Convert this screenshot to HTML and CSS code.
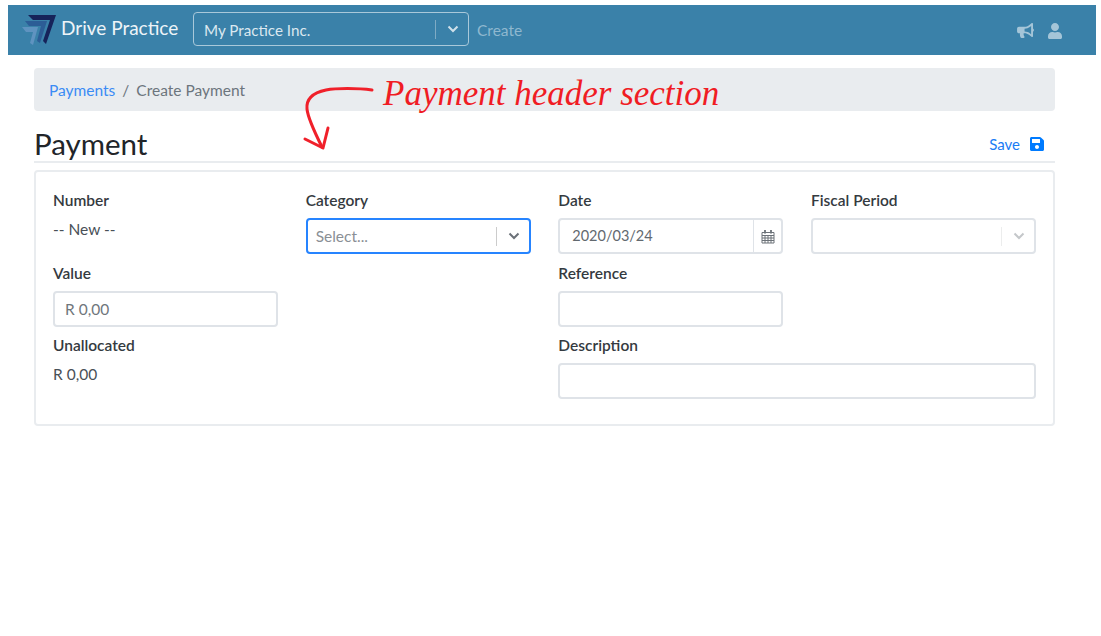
FILE: index.html
```html
<!DOCTYPE html>
<html lang="en">
<head>
<meta charset="utf-8">
<title>Create Payment</title>
<link rel="stylesheet" href="styles.css">
</head>
<body>
<div class="page">
  <nav class="navbar">
    <svg class="logo" viewBox="0 0 36 32" aria-hidden="true">
      <polygon class="logo-light" points="0,13 16,13 11,31 8,29 11,18 4,18"/>
      <polygon class="logo-mid" points="3,7 25,7 18,29 15,27 19,12 7,12"/>
      <polygon class="logo-dark" points="6,1 34,1 24,30 21,27 28,6 11,6"/>
    </svg>
    <span class="brand">Drive Practice</span>
    <div class="nav-select">
      <span class="nav-select-value">My Practice Inc.</span>
      <span class="sep sep-nav"></span>
      <svg class="chev chev-nav" viewBox="0 0 12 8"><path d="M1.500 1.500 6 6l4.500-4.500"/></svg>
    </div>
    <span class="nav-link">Create</span>
    <div class="nav-icons">
      <svg class="icon-horn" viewBox="0 0 576 512"><path d="M576 240c0-23.630-12.950-44.040-32-55.120V32.010C544 23.260 537.020 0 512 0c-7.120 0-14.190 2.380-19.980 7.020l-85.030 68.030C364.280 109.190 310.660 128 256 128H64c-35.350 0-64 28.650-64 64v96c0 35.350 28.650 64 64 64h33.700c-1.390 10.480-2.180 21.140-2.180 32 0 39.770 9.260 77.350 25.560 110.940 5.190 10.690 16.520 17.060 28.400 17.060h74.280c26.050 0 41.690-29.840 25.900-50.560-16.400-21.520-26.150-48.360-26.150-77.440 0-11.110 1.620-21.790 4.410-32H256c54.660 0 108.280 18.810 150.980 52.950l85.030 68.030a32.023 32.023 0 0 0 19.980 7.020c24.920 0 32-22.780 32-32V295.130C563.050 284.040 576 263.630 576 240zm-96 141.420l-33.050-26.440C392.950 311.780 325.120 288 256 288v-96c69.120 0 136.950-23.780 190.950-66.980L480 98.580v282.840z"/></svg>
      <svg class="icon-user" viewBox="0 0 448 512"><path d="M224 256c70.700 0 128-57.300 128-128S294.700 0 224 0 96 57.300 96 128s57.300 128 128 128zm89.600 32h-16.700c-22.200 10.200-46.900 16-72.900 16s-50.600-5.800-72.900-16h-16.700C60.200 288 0 348.200 0 422.400V464c0 26.500 21.500 48 48 48h352c26.500 0 48-21.500 48-48v-41.600c0-74.200-60.200-134.400-134.400-134.400z"/></svg>
    </div>
  </nav>

  <main class="content">
    <div class="breadcrumb">
      <a class="crumb-link" href="#">Payments</a>
      <span class="crumb-slash">/</span>
      <span class="crumb-current">Create Payment</span>
    </div>

    <header class="section-head">
      <h1 class="title">Payment</h1>
      <a class="save" href="#">Save
        <svg class="icon-save" viewBox="0 0 448 512"><path d="M433.941 129.941l-83.882-83.882A48 48 0 0 0 316.118 32H48C21.490 32 0 53.490 0 80v352c0 26.510 21.490 48 48 48h352c26.510 0 48-21.490 48-48V163.882a48 48 0 0 0-14.059-33.941zM224 416c-35.346 0-64-28.654-64-64 0-35.346 28.654-64 64-64s64 28.654 64 64c0 35.346-28.654 64-64 64zm96-304.520V212c0 6.627-5.373 12-12 12H76c-6.627 0-12-5.373-12-12V108c0-6.627 5.373-12 12-12h228.520c3.183 0 6.235 1.264 8.485 3.515l3.480 3.480A11.996 11.996 0 0 1 320 111.480z"/></svg>
      </a>
    </header>

    <section class="card">
      <div class="form-grid">
        <div class="field">
          <div class="label">Number</div>
          <div class="static">-- New --</div>
        </div>
        <div class="field">
          <div class="label">Category</div>
          <div class="select select-focus">
            <span class="placeholder">Select...</span>
            <span class="sep"></span>
            <svg class="chev" viewBox="0 0 12 8"><path d="M1.500 1.500 6 6l4.500-4.500"/></svg>
          </div>
        </div>
        <div class="field">
          <div class="label">Date</div>
          <div class="date">
            <span class="date-value">2020/03/24</span>
            <span class="date-btn">
              <svg class="icon-cal" viewBox="0 0 14 15">
                <path class="cal-frame" d="M1 3.500h12v10.500H1zM1 6.500h12M1 9h12M1 11.500h12M4 6.500V14M7 6.500V14M10 6.500V14"/>
                <path class="cal-rings" d="M4 1v3.500M10 1v3.500"/>
              </svg>
            </span>
          </div>
        </div>
        <div class="field">
          <div class="label">Fiscal Period</div>
          <div class="select select-disabled">
            <span class="placeholder"></span>
            <span class="sep"></span>
            <svg class="chev" viewBox="0 0 12 8"><path d="M1.500 1.500 6 6l4.500-4.500"/></svg>
          </div>
        </div>

        <div class="field">
          <div class="label">Value</div>
          <div class="input input-value">R 0,00</div>
        </div>
        <div class="field"></div>
        <div class="field">
          <div class="label">Reference</div>
          <div class="input"></div>
        </div>
        <div class="field"></div>

        <div class="field">
          <div class="label">Unallocated</div>
          <div class="static">R 0,00</div>
        </div>
        <div class="field"></div>
        <div class="field field-wide">
          <div class="label">Description</div>
          <div class="input"></div>
        </div>
      </div>
    </section>
  </main>

  <svg class="note-arrow" viewBox="0 0 80 80" aria-hidden="true">
    <path class="note-arrow-tail" d="M72 9C58 7 36 7 26 9 12 12 6 18 7 28 8 38 15 52 22 66"/>
    <path d="M5 58 23 67 28 47"/>
  </svg>
  <div class="note-text">Payment header section</div>
</div>
</body>
</html>
```
FILE: styles.css
```css
* { box-sizing: border-box; }

html, body { margin: 0; padding: 0; background: #fff; }

body {
  font-family: "Lato", "Liberation Sans", sans-serif;
  font-size: 15.500px;
  color: #495057;
}

.page { position: relative; width: 1101px; height: 636px; padding-top: 5px; overflow: hidden; }

.navbar {
  display: flex;
  align-items: center;
  height: 50px;
  margin: 0 5px 0 8px;
  padding: 0 34px 0 14px;
  background: #3a81a9;
}

.logo { width: 36px; height: 32px; flex: none; }
.logo-light { fill: #5f93c0; }
.logo-mid { fill: #2c5d96; }
.logo-dark { fill: #16235a; }

.brand {
  margin: -6px 0 0 3px;
  width: 132px;
  flex: none;
  font-size: 19px;
  color: #eef4f8;
}

.nav-select {
  display: flex;
  align-items: center;
  width: 276px;
  height: 34px;
  border: 1px solid #a9c8da;
  border-radius: 4px;
  margin-top: -2px;
  color: #dbe8f0;
}
.nav-select-value { flex: 1; padding-left: 10px; padding-top: 2px; font-size: 15.200px; }
.sep { width: 1px; height: 19px; background: #ccc; flex: none; }
.sep-nav { background: #7fabc4; }
.chev { width: 12px; height: 8px; margin: 0 9px 0 11px; flex: none; fill: none; stroke: #6b7178; stroke-width: 2; }
.chev-nav { stroke: #cfe0ea; }

.nav-link { margin-left: 8px; color: #8fb8cf; }

.nav-icons { display: flex; align-items: center; gap: 14px; margin-left: auto; margin-top: 1px; }
.icon-horn { width: 17px; height: 15px; fill: #a4c5d8; }
.icon-user { width: 14px; height: 16px; fill: #a4c5d8; }

.content { margin: 13px 46px 0 34px; }

.breadcrumb {
  display: flex;
  gap: 7px;
  align-items: center;
  height: 43px;
  padding: 0 15px;
  background: #e9ecef;
  border-radius: 4px;
}
.crumb-link { color: #3a8bf5; text-decoration: none; }
.crumb-slash, .crumb-current { color: #6c757d; }

.section-head {
  display: flex;
  align-items: flex-end;
  justify-content: space-between;
  height: 52px;
  border-bottom: 2px solid #e9ecef;
}
.title { margin: 0 0 -2px; font-size: 29.500px; line-height: 38px; font-weight: 400; color: #212529; }
.save {
  display: flex;
  align-items: center;
  gap: 10px;
  padding: 0 11px 8px 0;
  color: #1a7cf5;
  font-size: 15px;
  text-decoration: none;
}
.icon-save { width: 14px; height: 16px; fill: #007bff; }

.card {
  margin-top: 7px;
  height: 256px;
  padding: 17px;
  border: 2px solid #e9ecef;
  border-radius: 4px;
}

.form-grid {
  display: grid;
  grid-template-columns: repeat(4, 1fr);
  grid-auto-rows: 72.500px;
  column-gap: 27.600px;
}
.field-wide { grid-column: span 2; }

.label { height: 22px; line-height: 22px; margin-bottom: 7px; font-weight: 600; color: #343a40; }
.static { line-height: 22px; margin-top: 1.500px; color: #495057; }

.input, .select, .date {
  height: 36px;
  border: 2px solid #dfe3e8;
  border-radius: 4px;
  background: #fff;
}
.input { padding: 0 10px; line-height: 32px; color: #6f767c; }

.select { display: flex; align-items: center; }
.placeholder { flex: 1; padding-left: 8px; color: #8a8f95; }
.select-focus { border-color: #2684ff; }
.select-disabled .sep { background: #eceded; }
.select-disabled .chev { stroke: #c4c7ca; }

.date { display: flex; }
.date-value { flex: 1; padding-left: 12px; line-height: 32px; font-size: 14.500px; color: #62696f; }
.date-btn {
  display: flex;
  align-items: center;
  justify-content: center;
  width: 28px;
  border-left: 1.500px solid #dfe3e8;
}
.icon-cal { width: 14px; height: 15px; }
.cal-frame { fill: none; stroke: #6c7278; stroke-width: 1; }
.cal-rings { fill: none; stroke: #6c7278; stroke-width: 1.800; }

.note-arrow {
  position: absolute;
  left: 300px;
  top: 81px;
  width: 80px;
  height: 80px;
  fill: none;
  stroke: #f0202a;
  stroke-width: 3;
  stroke-linecap: round;
  stroke-linejoin: round;
}
.note-text {
  position: absolute;
  left: 383px;
  top: 74px;
  font-family: "Liberation Serif", serif;
  font-style: italic;
  font-size: 35px;
  line-height: 40px;
  color: #f01c24;
  white-space: nowrap;
}
```
